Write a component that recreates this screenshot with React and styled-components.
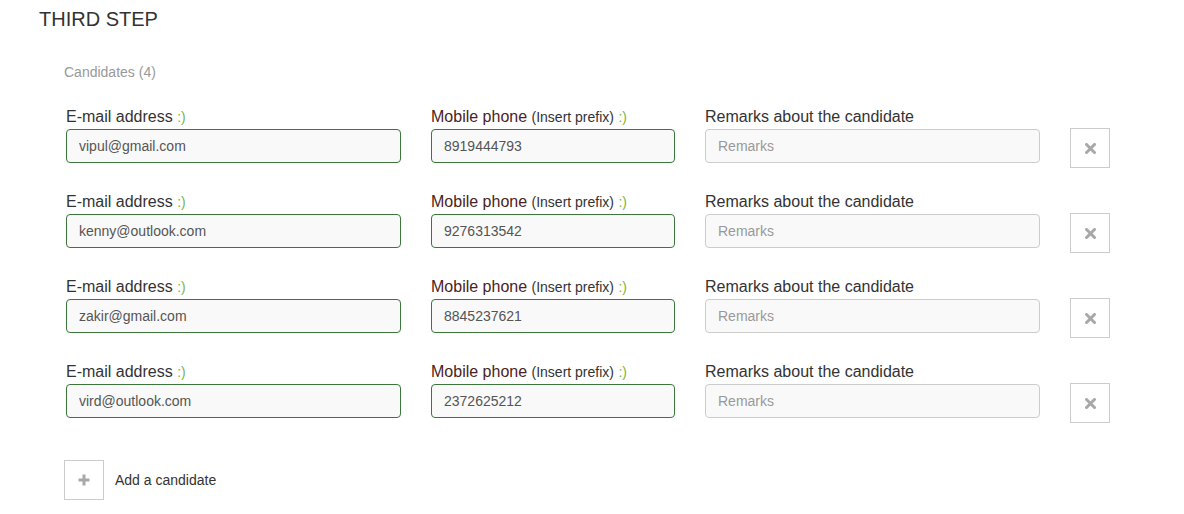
import React from "react";
import styled, { createGlobalStyle } from "styled-components";

const GlobalStyle = createGlobalStyle`
  body {
    margin: 0;
    background: #fff;
    font-family: "Liberation Sans", Arial, sans-serif;
    color: #333;
  }
`;

const Page = styled.div`
  padding: 8px 0 0 39px;
`;

const Title = styled.h2`
  margin: 0;
  font-size: 20px;
  font-weight: 400;
  line-height: 22px;
  color: #333;
`;

const Section = styled.div`
  padding: 0 0 0 25px;
`;

const Count = styled.div`
  margin-top: 34px;
  font-size: 14px;
  line-height: 16px;
  color: #999;
`;

const List = styled.div`
  margin-top: 27px;
  padding-left: 2px;
  display: flex;
  flex-direction: column;
  gap: 24px;
`;

const Row = styled.div`
  display: grid;
  grid-template-columns: 335px 244px 335px 40px;
  column-gap: 30px;
  align-items: start;
`;

const Field = styled.div`
  display: flex;
  flex-direction: column;
`;

const Label = styled.label`
  font-size: 16px;
  line-height: 20px;
  margin-bottom: 2px;
  color: ${(p) => (p.$tone === "warn" ? "#4a2424" : "#333")};
  white-space: nowrap;
`;

const Hint = styled.span`
  font-size: 14px;
  color: #333;
`;

const Smile = styled.span`
  font-size: 14px;
  color: #7cb342;
`;

const Input = styled.input`
  box-sizing: border-box;
  height: 34px;
  width: 100%;
  padding: 6px 12px;
  font-family: "Liberation Sans", Arial, sans-serif;
  font-size: 14px;
  color: #555;
  background: #f9f9f9;
  border: 1px solid ${(p) => (p.$valid ? "#3c763d" : "#ccc")};
  border-radius: 4px;
  outline: none;

  &::placeholder {
    color: #999;
  }
`;

const IconButton = styled.button`
  box-sizing: border-box;
  width: 40px;
  height: 40px;
  margin-top: ${(p) => p.$offset || 0}px;
  display: flex;
  align-items: center;
  justify-content: center;
  background: #fff;
  border: 1px solid #ccc;
  border-radius: 0;
  color: #a8a8a8;
  padding: 0;
  cursor: pointer;
`;

const AddRow = styled.div`
  margin-top: 37px;
  display: flex;
  align-items: center;
  gap: 11px;
  font-size: 14px;
  color: #333;
`;

const RemoveIcon = () => (
  <svg width="11" height="11" viewBox="0 0 11 11">
    <path d="M1.5 1.5 L9.5 9.5 M9.5 1.5 L1.5 9.5" stroke="currentColor" strokeWidth="3" strokeLinecap="square" fill="none" />
  </svg>
);

const PlusIcon = () => (
  <svg width="12" height="12" viewBox="0 0 12 12">
    <path d="M6 0.5 V11.5 M0.5 6 H11.5" stroke="currentColor" strokeWidth="3" fill="none" />
  </svg>
);

const candidates = [
  { email: "vipul@gmail.com", phone: "8919444793" },
  { email: "kenny@outlook.com", phone: "9276313542" },
  { email: "zakir@gmail.com", phone: "8845237621" },
  { email: "vird@outlook.com", phone: "2372625212" },
];

export default function App() {
  return (
    <>
      <GlobalStyle />
      <Page>
        <Title>THIRD STEP</Title>
        <Section>
          <Count>Candidates ({candidates.length})</Count>
          <List>
            {candidates.map((c, i) => (
              <Row key={i}>
                <Field>
                  <Label>
                    E-mail address <Smile>:)</Smile>
                  </Label>
                  <Input $valid defaultValue={c.email} />
                </Field>
                <Field>
                  <Label $tone="warn">
                    Mobile phone <Hint>(Insert prefix)</Hint> <Smile>:)</Smile>
                  </Label>
                  <Input $valid defaultValue={c.phone} />
                </Field>
                <Field>
                  <Label>Remarks about the candidate</Label>
                  <Input placeholder="Remarks" />
                </Field>
                <IconButton $offset={21} aria-label="Remove">
                  <RemoveIcon />
                </IconButton>
              </Row>
            ))}
          </List>
          <AddRow>
            <IconButton aria-label="Add">
              <PlusIcon />
            </IconButton>
            Add a candidate
          </AddRow>
        </Section>
      </Page>
    </>
  );
}
